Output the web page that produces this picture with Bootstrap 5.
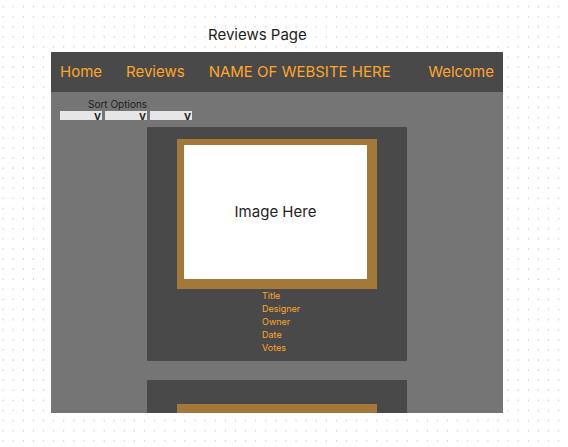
<!DOCTYPE html>
<html lang="en">
<head>
<meta charset="utf-8">
<meta name="viewport" content="width=device-width, initial-scale=1">
<title>Reviews Page</title>
<link href="https://cdn.jsdelivr.net/npm/bootstrap@5.3.0/dist/css/bootstrap.min.css" rel="stylesheet">
<style>
  body {
    font-family: Inter, "Liberation Sans", sans-serif;
    font-size: 15px;
    line-height: 20px;
    color: #1e1e1e;
    padding: 25px 65px 34px 51px;
    background: #fff url("data:image/svg+xml,%3Csvg xmlns='http://www.w3.org/2000/svg' width='101' height='101'%3E%3Cdefs%3E%3Cpattern id='d' width='10.1' height='10.1' patternUnits='userSpaceOnUse'%3E%3Crect x='2.6' y='6' width='1' height='1' fill='%23aaa'/%3E%3C/pattern%3E%3C/defs%3E%3Crect width='101' height='101' fill='url(%23d)'/%3E%3C/svg%3E");
  }
  .page-title { font-size: 15px; line-height: 20px; font-weight: 400; margin: 0 0 7px 157px; }
  .site-frame { background: #757575; min-height: 0; border-radius: 1px 1px 0 0; }
  .site-nav { background: #494949; height: 40px; padding: 0 9px; }
  .site-nav a { color: #ffa629; text-decoration: none; white-space: nowrap; }
  .sort-box { padding: 5px 9px 0; }
  .sort-title { font-size: 10px; line-height: 14px; padding-left: 28px; }
  .sort-row { gap: 3px; }
  .sort-pick { width: 42px; height: 9px; }
  .sort-pick select { appearance: none; display: block; width: 100%; height: 100%; padding: 0; border: 0; border-radius: 0; background: #e6e6e6; font-size: 8px; }
  .sort-mark { position: absolute; right: 1px; bottom: -2px; font-size: 12px; line-height: 12px; font-weight: 600; pointer-events: none; }
  .review-list { padding-top: 7px; }
  .review { background: #494949; margin: 0 96px; padding: 12px 30px 7px; border-radius: 1px; }
  .review + .review { margin-top: 19px; padding-top: 24px; }
  .review-frame { background: #a47838; padding: 6px 10px 10px 7px; }
  .review + .review .review-frame { padding-top: 10px; }
  .review-image { background: #fff; height: 134px; }
  .review-facts { color: #ffa629; font-size: 9px; line-height: 13px; padding-left: 85px; }
</style>
<script src="https://cdn.jsdelivr.net/npm/bootstrap@5.3.0/dist/js/bootstrap.bundle.min.js"></script>
</head>
<body class="d-flex flex-column vh-100 overflow-hidden">
  <h1 class="page-title">Reviews Page</h1>
  <div class="site-frame d-flex flex-column flex-grow-1 overflow-hidden">
    <nav class="site-nav d-flex align-items-center flex-shrink-0">
      <a href="#home">Home</a>
      <a href="#reviews" class="ms-4">Reviews</a>
      <a href="#top" class="ms-4">NAME OF WEBSITE HERE</a>
      <a href="#welcome" class="ms-auto">Welcome</a>
    </nav>
    <div class="sort-box flex-shrink-0">
      <div class="sort-title">Sort Options</div>
      <div class="sort-row d-flex">
        <div class="sort-pick position-relative"><select aria-label="First sort option"></select><span class="sort-mark" aria-hidden="true">v</span></div>
        <div class="sort-pick position-relative"><select aria-label="Second sort option"></select><span class="sort-mark" aria-hidden="true">v</span></div>
        <div class="sort-pick position-relative"><select aria-label="Third sort option"></select><span class="sort-mark" aria-hidden="true">v</span></div>
      </div>
    </div>
    <main class="review-list">
      <article class="review">
        <div class="review-frame"><div class="review-image d-flex align-items-center justify-content-center">Image Here</div></div>
        <ul class="review-facts list-unstyled mb-0">
          <li>Title</li>
          <li>Designer</li>
          <li>Owner</li>
          <li>Date</li>
          <li>Votes</li>
        </ul>
      </article>
      <article class="review">
        <div class="review-frame"><div class="review-image"></div></div>
      </article>
    </main>
  </div>
</body>
</html>
